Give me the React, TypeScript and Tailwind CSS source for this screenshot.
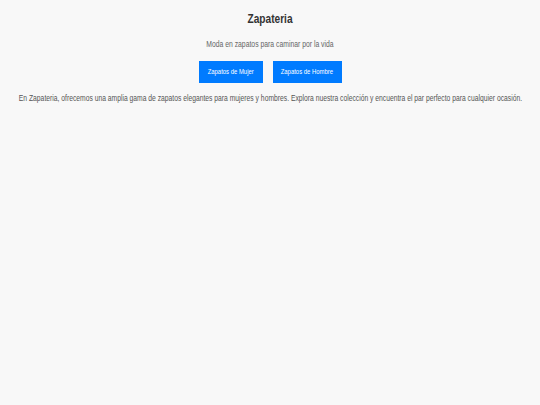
export default function App() {
  return (
    <div className="min-h-screen w-full overflow-hidden bg-[#f8f8f8] font-['Liberation_Sans',Arial,sans-serif] flex flex-col items-center pt-[10px]">
      <h1 className="text-[13.5px] leading-[17px] font-bold text-[#333333]">
        <span className="inline-block scale-x-75">Zapateria</span>
      </h1>
      <p className="mt-[11px] text-[9.1px] leading-[12px] text-[#666666]">
        <span className="inline-block scale-x-75">Moda en zapatos para caminar por la vida</span>
      </p>
      <nav className="mt-[11px] flex gap-[10px]">
        <a className="flex h-[22px] w-[64px] items-center justify-center bg-[#007bff] text-[7.9px] text-white">
          <span className="inline-block whitespace-nowrap scale-x-75">Zapatos de Mujer</span>
        </a>
        <a className="flex h-[22px] w-[69px] items-center justify-center bg-[#007bff] text-[7.9px] text-white">
          <span className="inline-block whitespace-nowrap scale-x-75">Zapatos de Hombre</span>
        </a>
      </nav>
      <p className="mt-[9px] text-[9px] leading-[12px] text-[#555555] whitespace-nowrap">
        <span className="inline-block scale-x-75">
          En Zapateria, ofrecemos una amplia gama de zapatos elegantes para mujeres y hombres. Explora nuestra colección y encuentra el par perfecto para cualquier ocasión.
        </span>
      </p>
    </div>
  );
}
